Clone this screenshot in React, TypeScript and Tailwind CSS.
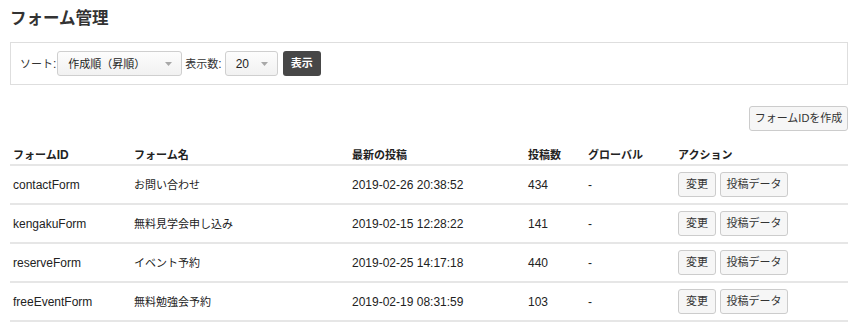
const rows = [
  { id: "contactForm", name: "お問い合わせ", date: "2019-02-26 20:38:52", count: 434 },
  { id: "kengakuForm", name: "無料見学会申し込み", date: "2019-02-15 12:28:22", count: 141 },
  { id: "reserveForm", name: "イベント予約", date: "2019-02-25 14:17:18", count: 440 },
  { id: "freeEventForm", name: "無料勉強会予約", date: "2019-02-19 08:31:59", count: 103 },
]

const cols = "grid grid-cols-[121px_218px_176px_60px_90px_1fr]"

// Japanese glyphs render a bit narrower than the latin text in the original
const J = ({ children }: { children: React.ReactNode }) => <span className="text-[11px]">{children}</span>

const Caret = () => (
  <svg width="7" height="4" viewBox="0 0 7 4" className="shrink-0">
    <path d="M0 0h7L3.5 4z" fill="#a8a8a8" />
  </svg>
)

const FakeSelect = ({ children, width }: { children: React.ReactNode; width: string }) => (
  <div
    className={`${width} h-[25px] flex items-center justify-between pl-[10px] pr-[9px] border border-[#cfcfcf] rounded-[3px] bg-gradient-to-b from-[#fdfdfd] to-[#f1f1f1] text-[12px] text-[#222]`}
  >
    <span>{children}</span>
    <Caret />
  </div>
)

export default function App() {
  return (
    <div className="min-h-screen bg-white px-[10px] pt-[6px] text-[#222] font-['Liberation_Sans','Noto_Sans_CJK_JP',sans-serif]">
      <h1 className="text-[16.5px] leading-[25px] font-bold text-[#333]">フォーム管理</h1>

      {/* filter bar */}
      <div className="mt-[11px] h-[43px] border border-[#dedede] flex items-center pl-[9px] text-[12px] text-[#333]">
        <span className="mr-[1px]">
          <J>ソート</J>:
        </span>
        <FakeSelect width="w-[125px]">
          <J>作成順（昇順）</J>
        </FakeSelect>
        <span className="ml-[3px] mr-[3px]">
          <J>表示数</J>:
        </span>
        <FakeSelect width="w-[53px]">20</FakeSelect>
        <button className="ml-[5px] w-[38px] h-[25px] rounded-[3px] bg-[#474747] text-white text-[11px] font-bold">
          表示
        </button>
      </div>

      <div className="mt-[21px] flex justify-end">
        <button className="w-[99px] h-[25px] border border-[#cccccc] rounded-[3px] bg-[#f6f6f6] text-[11px] text-[#333]">
          フォームIDを作成
        </button>
      </div>

      {/* table */}
      <div className="mt-[14px] text-[12px]">
        <div className={`${cols} h-[21px] items-center border-b-2 border-[#e6e6e6] font-bold`}>
          <div className="pl-[3px]">
            <J>フォーム</J>ID
          </div>
          <div className="pl-[3px]">
            <J>フォーム名</J>
          </div>
          <div className="pl-[3px]">
            <J>最新の投稿</J>
          </div>
          <div className="pl-[3px]">
            <J>投稿数</J>
          </div>
          <div className="pl-[3px]">
            <J>グローバル</J>
          </div>
          <div className="pl-[3px]">
            <J>アクション</J>
          </div>
        </div>
        {rows.map((r) => (
          <div key={r.id} className={`${cols} h-[39px] items-center border-b-2 border-[#e6e6e6]`}>
            <div className="pl-[3px]">{r.id}</div>
            <div className="pl-[3px]">
              <J>{r.name}</J>
            </div>
            <div className="pl-[3px]">{r.date}</div>
            <div className="pl-[3px]">{r.count}</div>
            <div className="pl-[3px]">-</div>
            <div className="pl-[3px] flex gap-[4px]">
              <button className="w-[38px] h-[25px] border border-[#cccccc] rounded-[3px] bg-[#f6f6f6] text-[11px] text-[#333]">
                変更
              </button>
              <button className="w-[68px] h-[25px] border border-[#cccccc] rounded-[3px] bg-[#f6f6f6] text-[11px] text-[#333]">
                投稿データ
              </button>
            </div>
          </div>
        ))}
      </div>
    </div>
  )
}
